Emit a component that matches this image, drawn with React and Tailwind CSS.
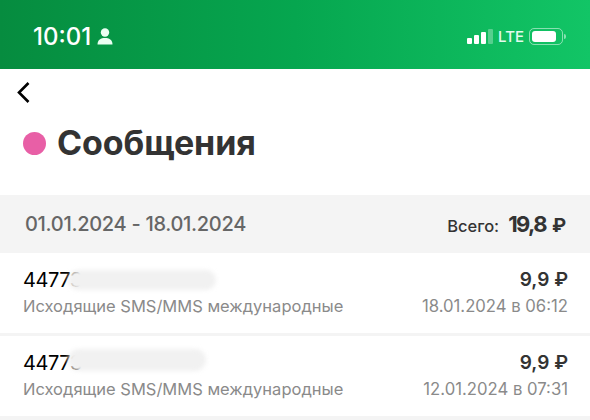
import React from "react";

const rows = [
  { date: "18.01.2024 в 06:12", digits: "44773", blur: "w-[148px] h-[20px] -ml-[14px] mt-0" },
  { date: "12.01.2024 в 07:31", digits: "44773", blur: "w-[138px] h-[22px] -ml-[14px] -mt-[6px]" },
];

const StatusBar = () => (
  <div className="h-[69px] flex items-center justify-between pt-[4px] pl-[33px] pr-[24px] bg-gradient-to-r from-[#068c3f] via-[#06a64f] to-[#12c566] text-white">
    <div className="flex items-center gap-[6px]">
      <span className="text-[24px] leading-none font-medium">10:01</span>
      <svg width="16" height="17" viewBox="0 0 16 17" fill="#eafff2">
        <circle cx="8" cy="4.5" r="4.2" />
        <path d="M0.5 16.5 C0.5 11.5 4 10 8 10 C12 10 15.5 11.5 15.5 16.5 Z" />
      </svg>
    </div>
    <div className="flex items-center gap-[5px]">
      <div className="flex items-end gap-[2px]">
        <div className="w-[5px] h-[6px] rounded-[1px] bg-white" />
        <div className="w-[5px] h-[9px] rounded-[1px] bg-white" />
        <div className="w-[5px] h-[12px] rounded-[1px] bg-white" />
        <div className="w-[5px] h-[15px] rounded-[1px] bg-white/30" />
      </div>
      <span className="text-[15px] leading-none font-medium text-[#e4fbee]">LTE</span>
      <div className="flex items-center gap-[1px]">
        <div className="w-[34px] h-[17px] rounded-[5px] border border-white/50 p-[2px]">
          <div className="w-[24px] h-full rounded-[3px] bg-white" />
        </div>
        <div className="w-[2px] h-[5px] rounded-r-sm bg-white/50" />
      </div>
    </div>
  </div>
);

export default function App() {
  return (
    <div className="w-[590px] h-[420px] overflow-hidden bg-white flex flex-col font-['Inter',sans-serif]">
      <StatusBar />

      <div className="pl-[17px] pt-[13px]">
        <svg width="13" height="21" viewBox="0 0 13 21" fill="none" stroke="#000" strokeWidth="2.6">
          <path d="M11.5 1 L2 10.5 L11.5 20" />
        </svg>
      </div>

      <div className="flex items-center gap-[11px] pl-[23px] pt-[9px] h-[71px]">
        <div className="w-[23px] h-[23px] rounded-full bg-[#e85fa6]" />
        <h1 className="text-[34px] leading-none font-bold tracking-[-0.1px] text-[#333333]">Сообщения</h1>
      </div>

      <div className="mt-[21px] h-[58px] shrink-0 bg-[#f4f4f4] flex items-center justify-between pl-[25px] pr-[24px]">
        <span className="text-[20px] font-medium tracking-[-0.3px] text-[#666666]">01.01.2024 - 18.01.2024</span>
        <div className="flex items-baseline text-[#333333]">
          <span className="text-[16.5px] font-medium mr-[9px]">Всего:</span>
          <span className="text-[22px] font-bold tracking-[-1.6px] mr-[6px]">19,8</span>
          <span className="text-[19px] font-bold">₽</span>
        </div>
      </div>

      <div className="flex-1 flex flex-col gap-[3px] bg-[#f4f4f4]">
        {rows.map((row) => (
          <div key={row.date} className="h-[80px] shrink-0 bg-white flex justify-between pl-[23px] pr-[22px] pt-[15px]">
            <div>
              <div className="flex items-center h-[24px]">
                <span className="text-[20px] tracking-[-0.4px] text-black">{row.digits}</span>
                <div className={`rounded-full bg-[#f1f1f1] blur-[2px] ${row.blur}`} />
              </div>
              <div className="mt-[2px] text-[16.5px] text-[#8a8a8a]">Исходящие SMS/MMS международные</div>
            </div>
            <div className="text-right">
              <div className="h-[24px] flex items-center justify-end text-[19px] font-semibold text-[#333333]">9,9 ₽</div>
              <div className="mt-[2px] text-[16.7px] text-[#8a8a8a]">{row.date}</div>
            </div>
          </div>
        ))}
      </div>
    </div>
  );
}
